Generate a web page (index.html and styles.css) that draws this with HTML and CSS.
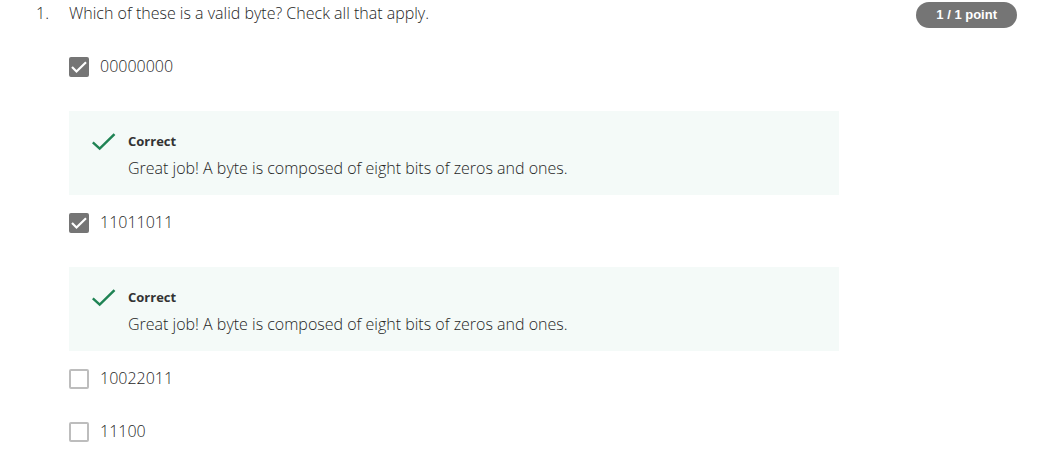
FILE: index.html
```html
<!DOCTYPE html>
<html lang="en">
<head>
<meta charset="utf-8">
<title>Question 1</title>
<link rel="stylesheet" href="styles.css">
</head>
<body>
<main class="question">
  <span class="number">1.</span>
  <fieldset class="body">
    <legend class="prompt">Which of these is a valid byte? Check all that apply.</legend>
    <label class="option"><input class="box" type="checkbox" checked><span>00000000</span></label>
    <section class="feedback">
      <svg class="tick" viewBox="0 0 24 24" aria-hidden="true"><path d="M0.8 12.3 L7.7 18.6 L22.5 4.2"/></svg>
      <div>
        <h2 class="verdict">Correct</h2>
        <p class="note">Great job! A byte is composed of eight bits of zeros and ones.</p>
      </div>
    </section>
    <label class="option"><input class="box" type="checkbox" checked><span>11011011</span></label>
    <section class="feedback">
      <svg class="tick" viewBox="0 0 24 24" aria-hidden="true"><path d="M0.8 12.3 L7.7 18.6 L22.5 4.2"/></svg>
      <div>
        <h2 class="verdict">Correct</h2>
        <p class="note">Great job! A byte is composed of eight bits of zeros and ones.</p>
      </div>
    </section>
    <label class="option"><input class="box" type="checkbox"><span>10022011</span></label>
    <label class="option"><input class="box" type="checkbox"><span>11100</span></label>
  </fieldset>
  <span class="points">1 / 1 point</span>
</main>
</body>
</html>
```

FILE: styles.css
```css
* { box-sizing: border-box; }

body {
  margin: 0;
  background: #fff;
  color: #1f1f1f;
  font: 300 16px/24px "Open Sans", sans-serif;
}

.question {
  display: flex;
  align-items: flex-start;
  padding: 1px 40px 0 36px;
}

.number { flex: 0 0 33px; }

.body {
  flex: 0 1 770px;
  min-width: 0;
  margin: 0;
  padding: 0;
  border: 0;
}

.prompt { padding: 0; margin-bottom: 29px; }

.option {
  display: flex;
  align-items: flex-start;
  gap: 11px;
  min-height: 24px;
  margin-bottom: 29px;
}

.feedback + .option { margin-top: 15px; }

.option:has(+ .feedback) { margin-bottom: 33px; }

.box {
  appearance: none;
  width: 20px;
  height: 20px;
  margin: 3px 0 0;
  border: 2px solid #bdbdbd;
  border-radius: 2px;
  background: #fff;
}

.box:checked {
  border-color: #757575;
  background: #757575 url("data:image/svg+xml,%3Csvg xmlns='http://www.w3.org/2000/svg' viewBox='0 0 16 16'%3E%3Cpath d='M1 8 5.5 12.5 15 3.2' fill='none' stroke='white' stroke-width='2.2'/%3E%3C/svg%3E") center / 16px 16px no-repeat;
}

.feedback {
  display: flex;
  gap: 12px;
  padding: 18px 23px 15px;
  background: #f4faf8;
}

.tick {
  flex: none;
  width: 24px;
  height: 24px;
  margin-top: 1px;
  fill: none;
  stroke: #1f8354;
  stroke-width: 2.5;
}

.verdict {
  margin: 0;
  color: #333;
  font-size: 13px;
  line-height: 24px;
}

.note {
  margin: 3px 0 0;
}

.points {
  margin: 1px 0 0 auto;
  padding: 0 20px;
  border-radius: 13px;
  background: #757575;
  color: #fff;
  font: bold 13px/26px "Liberation Sans", sans-serif;
  white-space: nowrap;
}
```
